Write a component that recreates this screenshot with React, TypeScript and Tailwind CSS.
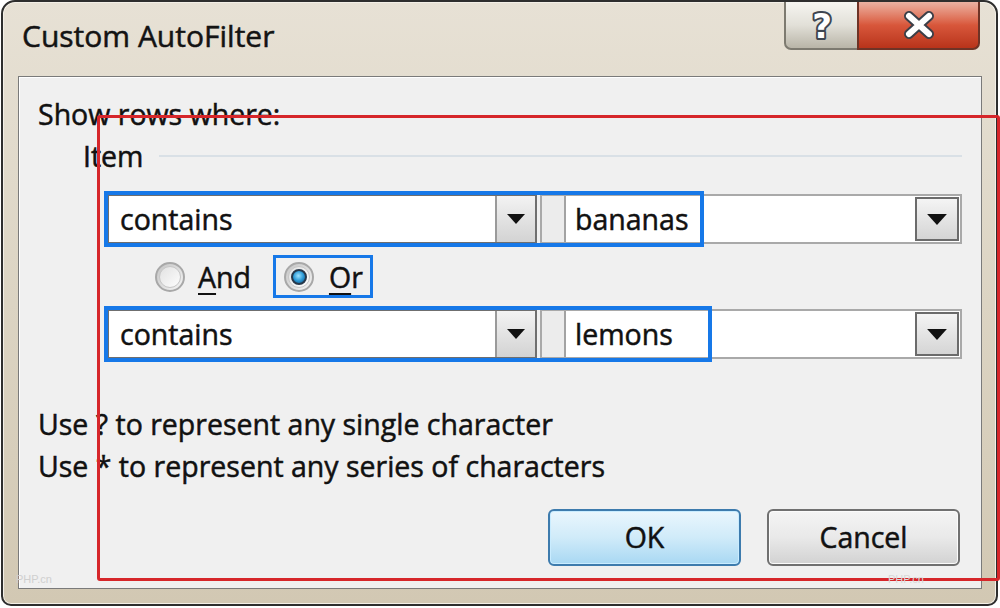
import React from "react";

const Triangle = ({ w = 18, h = 10 }: { w?: number; h?: number }) => (
  <svg width={w} height={h} viewBox="0 0 18 10">
    <path d="M0 0h18L9 10z" fill="#111" />
  </svg>
);

const Radio = ({ checked }: { checked?: boolean }) => (
  <span className="w-[30px] h-[30px] rounded-full border-2 border-[#a8a8a8] bg-gradient-to-br from-[#c4c4c4] to-[#f6f6f6] flex items-center justify-center shrink-0">
    <span className="w-[22px] h-[22px] rounded-full bg-gradient-to-br from-[#e2e2e2] to-[#fdfdfd] border border-[#c6c6c6] flex items-center justify-center">
      {checked && (
        <span className="w-[16px] h-[16px] rounded-full border-2 border-[#27384a] bg-[radial-gradient(circle_at_45%_40%,#9ee3ff,#2c9ad6_50%,#0d4d80)]" />
      )}
    </span>
  </span>
);

const Combo = ({ left, right }: { left: string; right: string }) => (
  <div className="flex gap-[3px] pl-[88px] pr-[19px] h-[50px]">
    <div className="w-[430px] flex bg-white border-2 border-[#6f6f6f]">
      <div className="flex-1 pl-[11px] flex items-center">{left}</div>
      <div className="w-[40px] border-l-2 border-[#9a9a9a] bg-gradient-to-b from-[#f3f3f3] to-[#d3d3d3] flex items-center justify-center">
        <Triangle />
      </div>
    </div>
    <div className="flex-1 flex bg-white border-2 border-[#a9a9a9]">
      <div className="w-[24px] bg-[#ececec] border-r-2 border-[#a3a3a3]" />
      <div className="flex-1 pl-[9px] flex items-center">{right}</div>
      <div className="w-[44px] m-[1px] border-2 border-[#6b6b6b] bg-gradient-to-b from-[#f4f4f4] to-[#d5d5d5] flex items-center justify-center">
        <Triangle w={20} h={11} />
      </div>
    </div>
  </div>
);

export default function App() {
  return (
    <div className="relative w-[1000px] h-[608px] bg-white overflow-hidden font-['Open_Sans','Noto_Sans',sans-serif] text-[#111] [-webkit-text-stroke:0.5px_#111]">
      <div className="ml-[1px] w-[997px] h-[606px] rounded-t-[14px] rounded-b-[10px] border-2 border-[#2e2e2e] bg-gradient-to-b from-[#e7e1d5] via-[#dcd4c3] to-[#d2c8b3] flex flex-col shadow-[inset_0_0_0_1px_#f3efe7]">
        {/* title bar */}
        <div className="h-[74px] flex items-start shrink-0">
          <div className="pl-[19px] pt-[14px] text-[30px] leading-[40px] text-[#141414]">Custom AutoFilter</div>
          <div className="ml-auto mr-[16px] flex h-[48px]">
            <div className="w-[73px] rounded-bl-[7px] border-2 border-t-0 border-r-0 border-[#7d7a70] bg-gradient-to-b from-[#f6f5f1] via-[#e2e0d8] to-[#b9b5a8] flex items-center justify-center">
              <svg width="32" height="40" viewBox="0 0 32 40" className="[-webkit-text-stroke:0]">
                <text x="16" y="33" textAnchor="middle" fontSize="34" fontWeight="700" fontFamily="DejaVu Sans, sans-serif" fill="#fff" stroke="#3d4550" strokeWidth="4" paintOrder="stroke" strokeLinejoin="round">?</text>
              </svg>
            </div>
            <div className="w-[123px] rounded-br-[7px] border-2 border-t-0 border-[#6e3326] bg-gradient-to-b from-[#eab1a2] via-[#d8573b] to-[#b8331a] flex items-center justify-center">
              <svg width="34" height="28" viewBox="0 0 34 28">
                <path d="M7 5L27 23M27 5L7 23" stroke="#3b3f48" strokeWidth="10" strokeLinecap="round" />
                <path d="M7 5L27 23M27 5L7 23" stroke="#fff" strokeWidth="6" strokeLinecap="round" />
              </svg>
            </div>
          </div>
        </div>

        {/* client area */}
        <div className="flex-1 ml-[15px] mr-[14px] mb-[15px] bg-[#f0f0f0] border border-[#7a7a7a] shadow-[inset_1px_1px_0_#ffffff] flex flex-col text-[28.5px]">
          <div className="mt-[18px] pl-[19px] leading-[38px]">Show rows where:</div>
          <div className="mt-[4px] pl-[64px] pr-[19px] flex items-center leading-[38px]">
            <span>Item</span>
            <div className="flex-1 ml-[15px] h-[2px] bg-[#d9e0e6]" />
          </div>

          <div className="mt-[19px]">
            <Combo left="contains" right="bananas" />
          </div>

          <div className="h-[65px] pl-[136px] flex items-center">
            <Radio />
            <span className="ml-[13px] leading-[38px]">
              <span className="underline decoration-2 underline-offset-[5px]">A</span>nd
            </span>
            <div className="ml-[22px] h-[43px] border-[3px] border-[#1678e8] pl-[8px] pr-[7px] flex items-center">
              <Radio checked />
              <span className="ml-[15px] leading-[36px]">
                <span className="underline decoration-2 underline-offset-[5px]">O</span>r
              </span>
            </div>
          </div>

          <Combo left="contains" right="lemons" />

          <div className="mt-[44px] pl-[19px] leading-[42px]">
            <div>Use ? to represent any single character</div>
            <div>Use * to represent any series of characters</div>
          </div>

          <div className="mt-[22px] pr-[21px] flex justify-end gap-[26px]">
            <button className="w-[193px] h-[57px] rounded-[6px] border-2 border-[#3d7bad] bg-gradient-to-b from-[#eaf6fd] via-[#d0ebf9] to-[#a8d8f3] shadow-[inset_0_0_0_1px_#c9ecff] flex items-center justify-center">
              OK
            </button>
            <button className="w-[193px] h-[57px] rounded-[6px] border-2 border-[#707070] bg-gradient-to-b from-[#f4f4f4] via-[#e9e9e9] to-[#d2d2d2] shadow-[inset_0_0_0_1px_#fbfbfb] flex items-center justify-center">
              Cancel
            </button>
          </div>
        </div>
      </div>

      {/* annotations */}
      <div className="absolute left-[104px] top-[191px] w-[600px] h-[56px] border-4 border-[#1678e8]" />
      <div className="absolute left-[104px] top-[306px] w-[608px] h-[56px] border-4 border-[#1678e8]" />
      <div className="absolute left-[97px] top-[115px] w-[903px] h-[466px] border-[3px] border-[#d6262a] rounded-[3px]" />
      <div className="absolute left-[16px] top-[571px] text-[11px] text-[#cfcfcf] [-webkit-text-stroke:0] font-['Liberation_Sans',sans-serif]">PHP.cn</div>
      <div className="absolute left-[888px] top-[571px] text-[11px] text-[#d8d8d8] [-webkit-text-stroke:0] font-['Liberation_Sans',sans-serif]">PHP.cn</div>
    </div>
  );
}
